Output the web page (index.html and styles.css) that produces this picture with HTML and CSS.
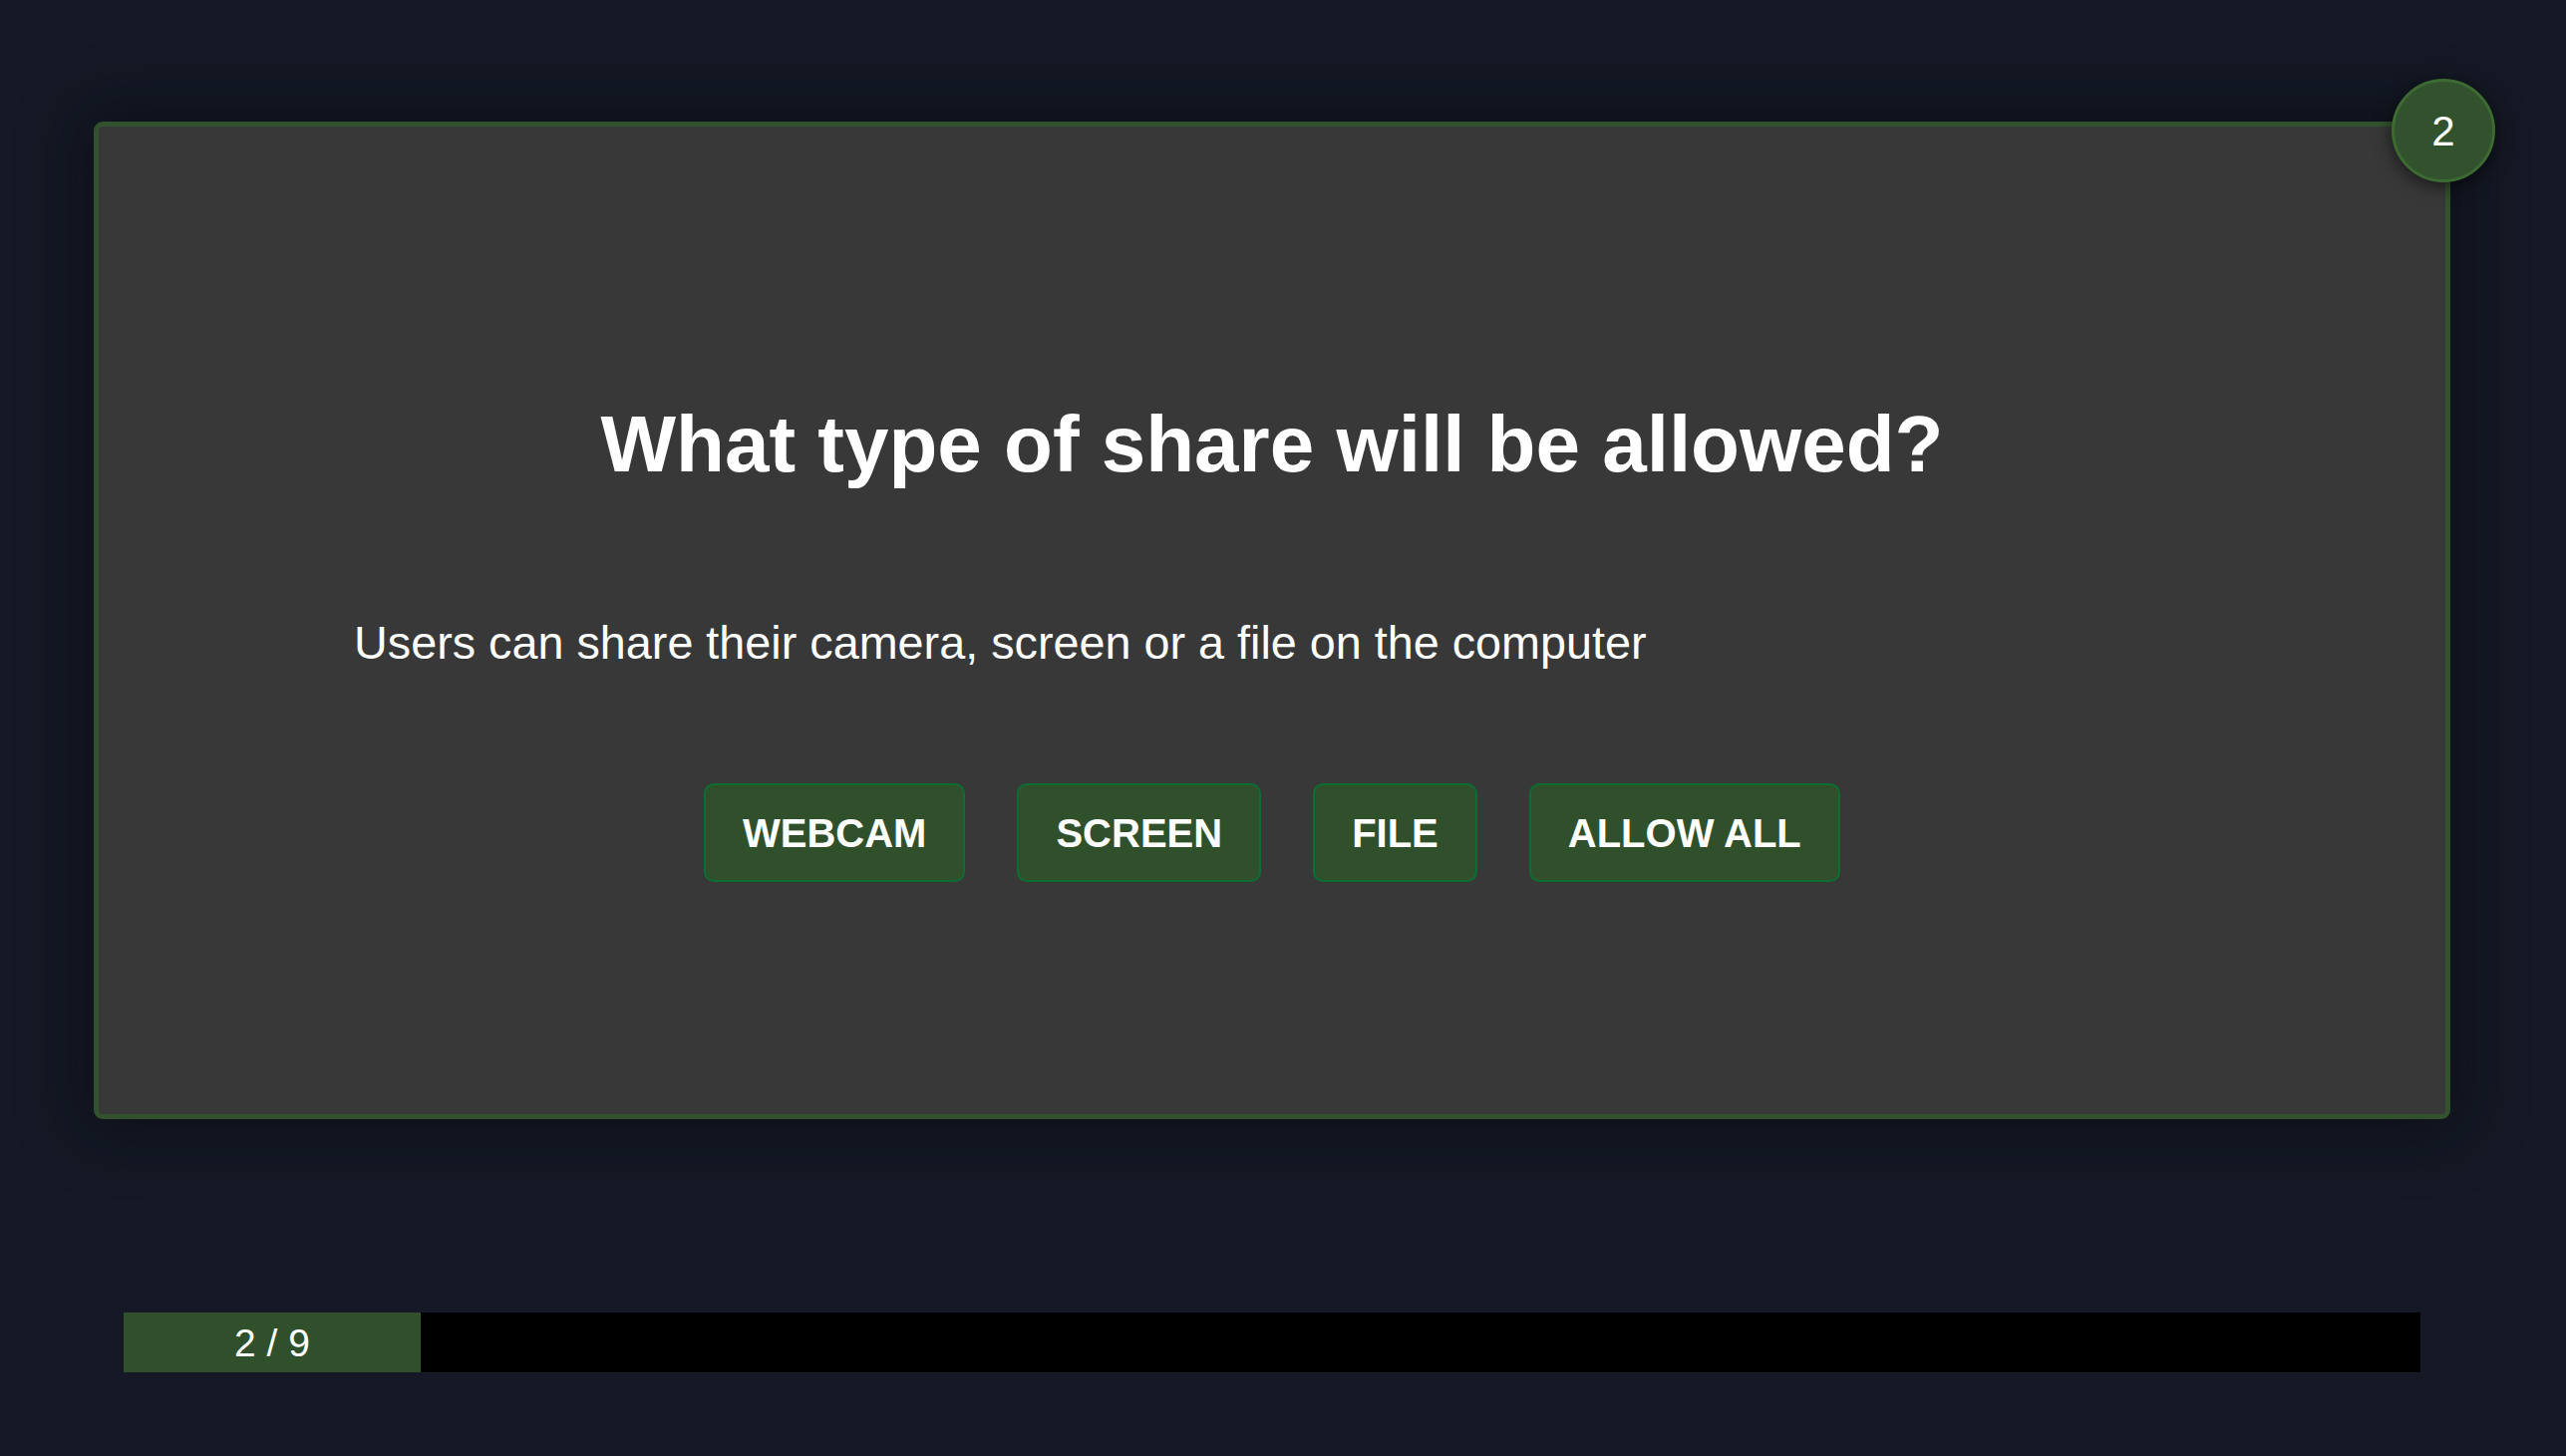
FILE: index.html
```html
<!DOCTYPE html>
<html lang="en">
<head>
<meta charset="utf-8">
<title>Share type</title>
<link rel="stylesheet" href="styles.css">
</head>
<body>
<main class="page">
  <section class="card">
    <div class="badge">2</div>
    <h1 class="title">What type of share will be allowed?</h1>
    <p class="desc">Users can share their camera, screen or a file on the computer</p>
    <div class="options">
      <button class="opt">WEBCAM</button>
      <button class="opt">SCREEN</button>
      <button class="opt">FILE</button>
      <button class="opt">ALLOW ALL</button>
    </div>
  </section>
  <div class="progress">
    <div class="progress-fill">2 / 9</div>
  </div>
</main>
</body>
</html>
```
FILE: styles.css
```css
* { box-sizing: border-box; }
html, body {
  margin: 0;
  padding: 0;
  background: #141925;
  width: 2574px;
  height: 1461px;
  overflow: hidden;
  font-family: "Liberation Sans", Arial, sans-serif;
  color: #ffffff;
}
.page {
  display: flex;
  flex-direction: column;
  padding-top: 122px;
}
.card {
  position: relative;
  margin-left: 94px;
  width: 2364px;
  height: 1001px;
  background: #383838;
  border: 5px solid #32522d;
  border-radius: 9px;
  box-shadow: 0 0 60px 10px rgba(8, 10, 16, 0.55);
  display: flex;
  flex-direction: column;
  padding-top: 271px;
}
.badge {
  position: absolute;
  top: -48px;
  right: -50px;
  width: 104px;
  height: 104px;
  border-radius: 50%;
  background: #32522e;
  border: 3px solid #3d6a32;
  box-shadow: 0 4px 18px rgba(0, 0, 0, 0.6);
  display: flex;
  align-items: center;
  justify-content: center;
  font-size: 42px;
  line-height: 1;
  padding-top: 2px;
}
.title {
  margin: 0;
  text-align: center;
  font-size: 80px;
  line-height: 96px;
  font-weight: 700;
}
.desc {
  margin: 124px 0 0 0;
  padding-left: 256px;
  font-size: 46.75px;
  line-height: 55px;
}
.options {
  display: flex;
  gap: 52px;
  margin-top: 113px;
  padding-left: 607px;
}
.opt {
  height: 99px;
  padding: 0 37px;
  background: #30502c;
  border: 2px solid #0c6e32;
  border-radius: 10px;
  color: #ffffff;
  font-family: "Liberation Sans", Arial, sans-serif;
  font-weight: 700;
  font-size: 40px;
  line-height: 1;
  cursor: pointer;
}
.progress {
  margin-top: 194px;
  margin-left: 124px;
  width: 2304px;
  height: 60px;
  background: #000000;
  display: flex;
}
.progress-fill {
  width: 298px;
  height: 100%;
  background: #30502c;
  display: flex;
  align-items: center;
  justify-content: center;
  font-size: 39px;
  padding-top: 2px;
}
```
